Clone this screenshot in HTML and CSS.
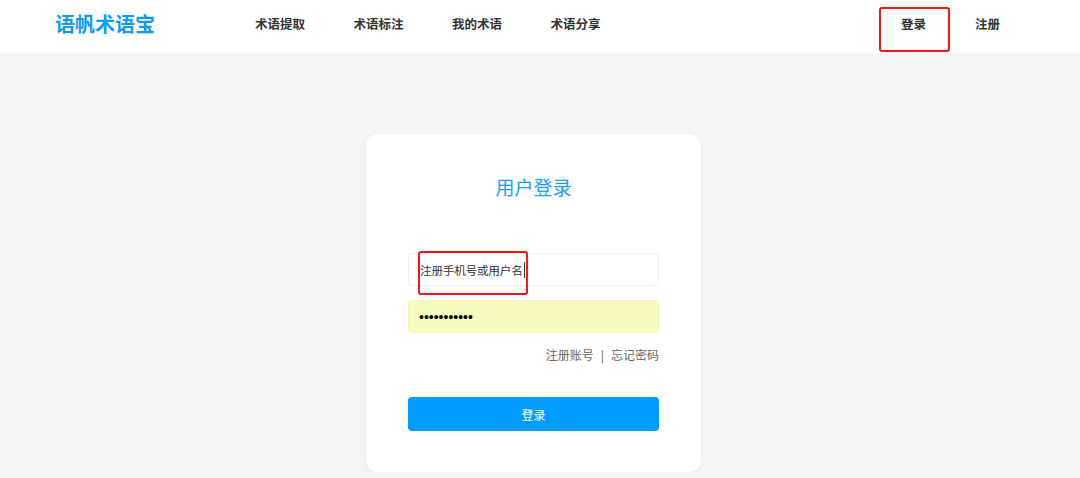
FILE: index.html
```
<!doctype html>
<html>

<head>
    <meta charset="utf-8">
    <link rel="stylesheet" href="styles.css">
</head>

<body>

    <div class="header">
        <div class="logo">语帆术语宝</div>
        <div class="nav">
            <a class="navItem">术语提取</a>
            <a class="navItem">术语标注</a>
            <a class="navItem">我的术语</a>
            <a class="navItem">术语分享</a>
        </div>
        <div class="userLinks">
            <a class="userItem">登录</a>
            <a class="userItem">注册</a>
            <span class="markBox headerMark"></span>
        </div>
    </div>

    <div class="main">
        <div class="card">
            <div class="cardTitle">用户登录</div>

            <div class="field">
                <input type="text" class="textBox" value="注册手机号或用户名">
                <span class="markBox fieldMark"></span>
            </div>
            <div class="field">
                <input type="password" class="textBox filled" value="12345678901">
            </div>

            <div class="links">
                <a>注册账号</a>
                <span class="sep">|</span>
                <a>忘记密码</a>
            </div>

            <input type="button" class="loginButton" value="登录">
        </div>
    </div>

</body>

</html>
```

FILE: styles.css
```
body {
    margin: 0;
    background-color: #f5f5f5;
    font-family: "Noto Sans CJK SC", "Noto Sans", sans-serif;
    color: #333;
}

a {
    cursor: pointer;
}

.header {
    display: flex;
    align-items: center;
    height: 48px;
    padding-bottom: 5px;
    background-color: #fff;
}

.logo {
    margin-left: 55px;
    width: 200px;
    font-size: 20px;
    line-height: 26px;
    font-weight: bold;
    color: #0c9cf6;
}

.nav {
    display: flex;
    gap: 48.5px;
    flex: 1;
}

.navItem {
    font-size: 12.5px;
    line-height: 18px;
    font-weight: bold;
    color: #333;
}

.userLinks {
    position: relative;
    display: flex;
    gap: 49px;
    margin-right: 80px;
}

.userItem {
    font-size: 12.5px;
    line-height: 18px;
    font-weight: bold;
    color: #333;
}

.markBox {
    position: absolute;
    border: 2px solid #f5161a;
    border-radius: 3px;
    box-sizing: border-box;
}

.headerMark {
    left: -22px;
    top: -8px;
    width: 71px;
    height: 45px;
}

.main {
    display: flex;
    justify-content: center;
    padding-top: 81px;
    padding-right: 13px;
}

.card {
    width: 335px;
    box-sizing: border-box;
    padding: 41px 42px 41px;
    background-color: #fff;
    border-radius: 12px;
    box-shadow: 0 2px 6px rgba(0, 0, 0, 0.06);
}

.cardTitle {
    text-align: center;
    font-size: 19px;
    line-height: 24px;
    color: #1c9bf2;
    margin-bottom: 54px;
}

.field {
    position: relative;
    margin-bottom: 14px;
}

.textBox {
    display: block;
    width: 100%;
    height: 33px;
    box-sizing: border-box;
    padding: 0 11px;
    border: 1px solid #efefef;
    border-radius: 4px;
    background-color: #fff;
    font-family: "Noto Sans CJK SC", sans-serif;
    font-size: 11.6px;
    letter-spacing: -0.2px;
    color: #333;
    outline: none;
}

.filled {
    background-color: #f9fcc0;
    border-color: #f3f5c4;
    color: #000;
    padding-left: 10px;
    font-family: "Liberation Sans", sans-serif;
    font-size: 14px;
    letter-spacing: 0;
}

.fieldMark {
    left: 10px;
    top: -2px;
    width: 110px;
    height: 44px;
}

.fieldMark::after {
    content: "";
    position: absolute;
    right: 1px;
    top: 9px;
    width: 1px;
    height: 16px;
    background-color: #333;
}

.links {
    display: flex;
    justify-content: flex-end;
    align-items: center;
    gap: 7px;
    margin-top: -1px;
    font-size: 12px;
    line-height: 18px;
    color: #666;
}

.sep {
    color: #555;
}

.loginButton {
    display: block;
    width: 100%;
    height: 34px;
    margin-top: 33px;
    border: none;
    border-radius: 4px;
    background-color: #009dff;
    color: #fff;
    font-family: "Noto Sans CJK SC", sans-serif;
    font-size: 12px;
}
```
